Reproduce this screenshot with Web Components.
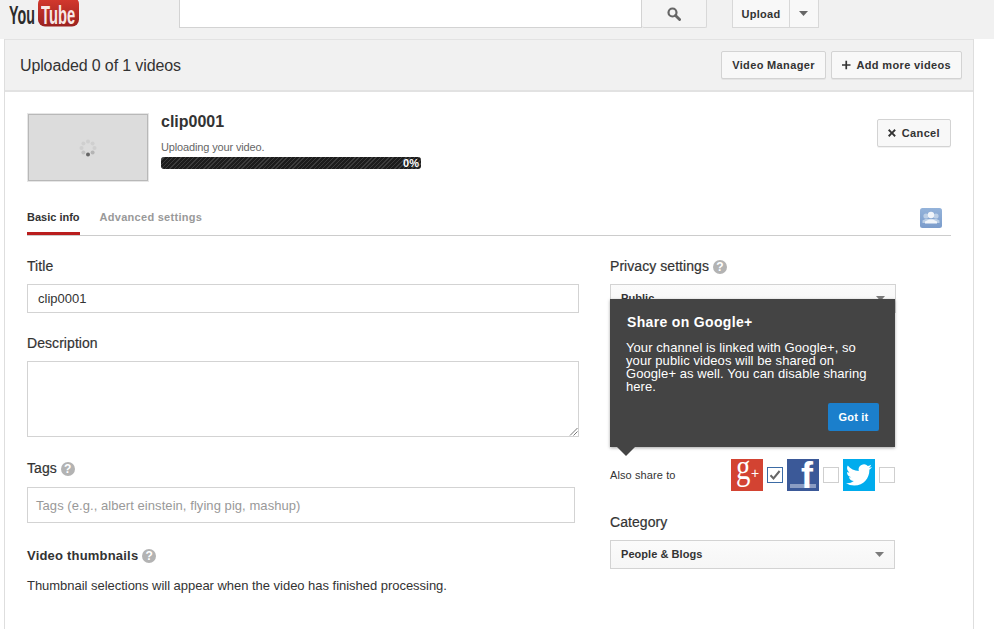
<!DOCTYPE html>
<html><head><meta charset="utf-8"><title>Upload</title>
<style>
html,body{margin:0;padding:0;background:#fff;font-family:"Liberation Sans",Arial,sans-serif;color:#333;overflow:hidden;height:629px}
</style></head><body>
<yt-masthead></yt-masthead>
<upload-page></upload-page>
<script>
const def=(name,html)=>{customElements.define(name,class extends HTMLElement{
  connectedCallback(){ if(this.shadowRoot)return; const r=this.attachShadow({mode:'open'}); r.innerHTML=typeof html==='function'?html(this):html; }
});};
const caret='<svg width="9" height="5" viewBox="0 0 9 5"><path d="M0 0h9L4.5 5z" fill="#666"/></svg>';
def('yt-logo',`<style>:host{display:block;width:71px;height:27px;position:relative}
svg{position:absolute;left:0;top:0;overflow:visible}
span{position:absolute;top:1px;font:bold 25px/28px "Liberation Sans";transform-origin:0 0;white-space:nowrap}
.you{left:0;color:#2b2b2b;transform:scaleX(.57)}
.t{left:32px;color:#f7e9e7;transform:scaleX(.59)}</style>
<svg width="71" height="27" viewBox="0 0 71 27"><defs><linearGradient id="r" x1="0" y1="0" x2="0" y2="1"><stop offset="0" stop-color="#d83a2e"/><stop offset="1" stop-color="#9a2220"/></linearGradient></defs>
<rect x="29" y="-3" width="41" height="29.5" rx="7" fill="url(#r)"/></svg>
<span class="you">You</span><span class="t">Tube</span>`);
def('yt-btn',`<style>:host{display:inline-flex;align-items:center;justify-content:center;box-sizing:border-box;height:28px;padding:0 10px;gap:6px;background:#f8f8f8;border:1px solid #d3d3d3;border-radius:2px;box-shadow:0 1px 0 rgba(0,0,0,.05);font:bold 11px "Liberation Sans";color:#333;letter-spacing:.35px;white-space:nowrap}</style><slot name="i"></slot><slot></slot>`);
def('yt-masthead',`<style>:host{display:flex;box-sizing:border-box;height:39px;background:#f1f1f1;padding-left:9px;align-items:flex-start}
.search{margin-left:99px;width:463px;height:28px;box-sizing:border-box;background:#fff;border:1px solid #d3d3d3;border-top:0}
.sb{width:65px;height:28px;box-sizing:border-box;background:#f4f4f4;border:1px solid #d8d8d8;border-top:0;border-left:0;border-radius:0 0 2px 2px;display:flex;align-items:center;justify-content:center}
.up{margin-left:25px;display:flex}
.u{width:58px;height:28px;box-sizing:border-box;background:#f8f8f8;border:1px solid #d8d8d8;border-top:0;font:bold 11px "Liberation Sans";letter-spacing:.3px;color:#333;display:flex;align-items:center;justify-content:center}
.c{width:29px;height:28px;box-sizing:border-box;background:#f8f8f8;border:1px solid #d8d8d8;border-top:0;border-left:0;display:flex;align-items:center;justify-content:center}
.c svg{margin-right:2px}</style>
<yt-logo></yt-logo><div class="search"></div>
<div class="sb"><svg width="14" height="14" viewBox="0 0 14 14"><circle cx="5.5" cy="5.5" r="4" fill="none" stroke="#666" stroke-width="2.2"/><path d="M8.5 8.5L12.6 12.6" stroke="#666" stroke-width="2.8" stroke-linecap="round"/></svg></div>
<div class="up"><div class="u">Upload</div><div class="c">${caret}</div></div>`);
def('yt-help',`<style>:host{display:inline-flex;width:14px;height:14px;margin:-4px 0;border-radius:50%;background:#b3b3b3;color:#fff;font:bold 12px/14px "Liberation Sans";-webkit-text-stroke:0;letter-spacing:0;align-items:center;justify-content:center;vertical-align:0}</style>?`);
def('yt-label',`<style>:host{display:block;box-sizing:border-box;height:16px;font:14px/14px "Liberation Sans";color:#333;white-space:nowrap;-webkit-text-stroke:.2px #333;letter-spacing:.06px}</style><slot></slot>`);
def('yt-input',`<style>:host{display:flex;align-items:center;box-sizing:border-box;height:29px;background:#fff;border:1px solid #d3d3d3;padding:0 10px;font:13px "Liberation Sans";color:#333}</style><slot></slot>`);
def('yt-select',`<style>:host{display:flex;align-items:center;justify-content:space-between;box-sizing:border-box;height:29px;padding-bottom:1px;background:linear-gradient(#fbfbfb,#f6f6f6);border:1px solid #d3d3d3;padding-left:10px;padding-right:10px;font:bold 11px "Liberation Sans";letter-spacing:.05px;color:#333}svg{opacity:.85}</style><slot></slot>${caret}`);
def('yt-progress',`<style>:host{display:flex;justify-content:flex-end;align-items:center;box-sizing:border-box;width:260px;height:12px;border-radius:3px;padding-right:2px;background:repeating-linear-gradient(135deg,#1c1c1c 0 2px,#3c3c3c 2px 3px);font:bold 11px/12px "Liberation Sans";color:#fff}</style><slot></slot>`);
def('yt-thumb',`<style>:host{display:flex;align-items:center;justify-content:center;box-sizing:border-box;width:122px;height:69px;background:#dcdcdc;border:2px solid #b8b8b8;outline:1px solid #e6e6e6;outline-offset:-1px}</style>
<svg width="18" height="18" viewBox="0 0 18 18"><g fill="#cfcfcf"><circle cx="9" cy="2.5" r="2"/><circle cx="13.6" cy="4.4" r="2"/><circle cx="15.5" cy="9" r="2"/><circle cx="4.4" cy="4.4" r="2"/><circle cx="2.5" cy="9" r="2"/></g><circle cx="13.6" cy="13.6" r="2" fill="#b5b5b5"/><circle cx="4.4" cy="13.6" r="2" fill="#c2c2c2"/><circle cx="9" cy="15.5" r="2" fill="#666"/></svg>`);
def('yt-popover',`<style>:host{position:absolute;left:0;top:40px;box-sizing:border-box;width:285px;height:148px;background:#444;box-shadow:0 1px 3px rgba(0,0,0,.35);padding:15px 16px;color:#fff;font:13px/13px "Liberation Sans";letter-spacing:.08px;display:flex;flex-direction:column}
h3{margin:0 0 11px 1px;font:bold 14px/16px "Liberation Sans";letter-spacing:.34px}p{margin:0}
button{align-self:flex-end;margin-top:10px;width:51px;height:28px;border:0;border-radius:2px;background:#1b7fcc;color:#fff;font:bold 11px "Liberation Sans";padding:0;letter-spacing:.2px}
i{position:absolute;left:7px;top:100%;border:9px solid transparent;border-top-color:#444;border-bottom:0}</style>
<h3>Share on Google+</h3><p>Your channel is linked with Google+, so your public videos will be shared on Google+ as well. You can disable sharing here.</p><button>Got it</button><i></i>`);
def('yt-check',h=>`<style>:host{display:block;box-sizing:border-box;width:16px;height:16px;background:#fff;border:1px solid ${h.hasAttribute('on')?'#3b6ba5':'#cfcfcf'}}svg{display:block}</style>${h.hasAttribute('on')?'<svg width="14" height="14" viewBox="0 0 14 14"><path d="M2.5 7.2L5.5 10.4 11.6 3" fill="none" stroke="#666" stroke-width="2"/></svg>':''}`);
def('yt-share',`<style>:host{display:flex;align-items:center;height:32px;font:11px "Liberation Sans";color:#333}
.l{width:121px;letter-spacing:.1px}.s{width:32px;height:32px;position:relative;flex:none}.ck{margin:0 4px}
.g{background:#d34332;color:#fff}.g b{position:absolute;left:5px;top:0;font:normal 36px/16px "Liberation Serif";transform:scaleX(.8);transform-origin:0 0}.g u{position:absolute;left:20px;top:7px;font:14px/14px "Liberation Sans";text-decoration:none}
.f{background:#3b5998;color:#fff}.f b{position:absolute;left:14px;top:2px;font:bold 36px/30px "Liberation Sans"}.f i{position:absolute;left:3px;right:3px;bottom:3px;height:4px;background:#8b9dc3;}
.t{background:#00aced;display:flex;align-items:center;justify-content:center}</style>
<span class="l">Also share to</span>
<div class="s g"><b>g</b><u>+</u></div><yt-check class="ck" on></yt-check>
<div class="s f"><i></i><b>f</b></div><yt-check class="ck"></yt-check>
<div class="s t"><svg width="26" height="26" viewBox="0 0 24 24"><path fill="#fff" d="M23.953 4.57a10 10 0 01-2.825.775 4.958 4.958 0 002.163-2.723c-.951.555-2.005.959-3.127 1.184a4.92 4.92 0 00-8.384 4.482C7.69 8.095 4.067 6.13 1.64 3.162a4.822 4.822 0 00-.666 2.475c0 1.71.87 3.213 2.188 4.096a4.904 4.904 0 01-2.228-.616v.06a4.923 4.923 0 003.946 4.827 4.996 4.996 0 01-2.212.085 4.936 4.936 0 004.604 3.417 9.867 9.867 0 01-6.102 2.105c-.39 0-.779-.023-1.17-.067a13.995 13.995 0 007.557 2.209c9.053 0 13.998-7.496 13.998-13.985 0-.21 0-.42-.015-.63A9.935 9.935 0 0024 4.59z"/></svg></div><yt-check class="ck"></yt-check>`);
def('upload-page',`<style>
:host{display:block;box-sizing:border-box;margin-left:4px;width:970px;height:590px;border-left:1px solid #dedede;border-right:1px solid #dedede;font-family:"Liberation Sans"}
.bar{box-sizing:border-box;height:53px;background:#f1f1f1;border-top:1px solid #e2e2e2;border-bottom:2px solid #e2e2e2;display:flex;align-items:center;padding:0 11px 0 15px;gap:5px}
.bar h1{margin:0 auto 0 0;padding-top:2px;font:16px "Liberation Sans";color:#333;letter-spacing:-.13px}
.content{padding:21px 22px 0}
.file{display:flex;align-items:flex-start}
.meta{margin-left:12px;flex:1}
.meta h2{margin:0;font:bold 16px/18px "Liberation Sans";color:#333;height:27px}
.meta p{margin:0 0 3px;font:11px/14px "Liberation Sans";color:#666;letter-spacing:-.14px}
.cancel{margin-top:6px}
.tabs{margin-top:23px;height:30px;border-bottom:1px solid #ccc;display:flex;align-items:flex-start;position:relative;font:bold 11px "Liberation Sans"}
.tabs span{box-sizing:border-box;height:31px;padding-top:6px;color:#999;letter-spacing:.28px;margin-left:20px}
.tabs .on{color:#333;border-bottom:3px solid #b91d1d;letter-spacing:0;margin-left:0;height:30px}
.tabs svg{margin-left:auto;margin-right:9px;margin-top:3px}
.form{margin-top:23px;display:grid;grid-template-columns:552px 1fr;column-gap:31px}
.right{position:relative}
.mt{margin-bottom:9px}
.desc{height:76px;align-items:flex-start;padding:0;position:relative}
.tagsl{margin-top:24px;margin-bottom:10px}
.tags{height:36px;width:548px;color:#999;padding:0 8px;letter-spacing:.06px}
.vt{margin-top:26px;font-weight:bold;font-size:13px;letter-spacing:.2px;-webkit-text-stroke:0}
.note{margin:14px 0 0;font:13px/14px "Liberation Sans";color:#333;letter-spacing:-.03px}
.grip{position:absolute;right:0;bottom:0}
.clip{width:286px;overflow:hidden}
.sh{margin-top:146px}
.cat{margin-top:24px;margin-bottom:9px}
.catsel{width:285px}
yt-btn svg{display:block}
</style>
<div class="bar"><h1>Uploaded 0 of 1 videos</h1>
<yt-btn style="width:105px">Video Manager</yt-btn>
<yt-btn style="width:131px"><svg slot="i" width="10" height="10" viewBox="0 0 10 10"><path d="M4 0h2v4h4v2H6v4H4V6H0V4h4z" fill="#333"/></svg>Add more videos</yt-btn></div>
<div class="content">
<div class="file"><yt-thumb></yt-thumb><div class="meta"><h2>clip0001</h2><p>Uploading your video.</p><yt-progress>0%</yt-progress></div>
<yt-btn class="cancel" style="width:74px"><svg slot="i" width="10" height="10" viewBox="0 0 10 10"><path d="M1.7 0L5 3.3 8.3 0 10 1.7 6.7 5 10 8.3 8.3 10 5 6.7 1.7 10 0 8.3 3.3 5 0 1.7z" fill="#333"/></svg>Cancel</yt-btn></div>
<div class="tabs"><span class="on">Basic info</span><span>Advanced settings</span>
<svg width="22" height="20" viewBox="0 0 22 20"><defs><linearGradient id="b" x1="0" y1="0" x2="0" y2="1"><stop offset="0" stop-color="#94b3da"/><stop offset="1" stop-color="#7b9ccb"/></linearGradient></defs><rect width="22" height="20" rx="2.5" fill="url(#b)"/><g fill="#bccfe6"><circle cx="6" cy="8" r="2.6"/><circle cx="16" cy="8" r="2.6"/><path d="M2.5 15v-2.5l3-1.5h11l3 1.5V15z"/></g><circle cx="11" cy="7" r="3.2" fill="#f1f5fa"/><path d="M5 15.5v-2l4-2h4l4 2v2z" fill="#f1f5fa"/></svg></div>
<div class="form">
<div>
<yt-label class="mt">Title</yt-label><yt-input>clip0001</yt-input>
<yt-label style="margin-top:23px" class="mt">Description</yt-label>
<yt-input class="desc"><svg class="grip" width="9" height="9" viewBox="0 0 9 9"><path d="M8.5 1L1 8.5M8.5 4.5L4.5 8.5" stroke="#777" stroke-width="1"/></svg></yt-input>
<yt-label class="tagsl">Tags <yt-help></yt-help></yt-label>
<yt-input class="tags">Tags (e.g., albert einstein, flying pig, mashup)</yt-input>
<yt-label class="vt">Video thumbnails <yt-help></yt-help></yt-label>
<p class="note">Thumbnail selections will appear when the video has finished processing.</p>
</div>
<div class="right">
<yt-label class="mt">Privacy settings <yt-help></yt-help></yt-label>
<yt-select class="clip">Public</yt-select>
<yt-popover></yt-popover>
<yt-share class="sh"></yt-share>
<yt-label class="cat">Category</yt-label>
<yt-select class="catsel">People &amp; Blogs</yt-select>
</div>
</div></div>`);
</script>
</body></html>
